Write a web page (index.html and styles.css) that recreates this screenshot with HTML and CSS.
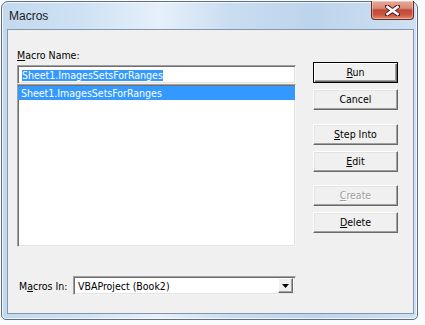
FILE: index.html
```html
<!DOCTYPE html>
<html lang="en">
<head>
	<meta charset="UTF-8">
	<title>Macros</title>
	<link rel="stylesheet" href="styles.css">
</head>
<body>
	<div class="window">
		<div class="titlebar">
			<span class="title">Macros</span>
			<span class="close">
				<svg width="15" height="11" viewBox="0 0 15 11">
					<path d="M2 1.5 L13 9.5 M13 1.5 L2 9.5" stroke="#5a2020" stroke-width="4.5" stroke-linecap="square"/>
					<path d="M2.5 2 L12.5 9 M12.5 2 L2.5 9" stroke="#fff" stroke-width="2.6" stroke-linecap="square"/>
				</svg>
			</span>
		</div>
		<div class="client">
			<div class="main">
				<div class="label"><u>M</u>acro Name:</div>
				<div class="field"><span class="sel">Sheet1.ImagesSetsForRanges</span></div>
				<div class="list">
					<div class="item on">Sheet1.ImagesSetsForRanges</div>
				</div>
				<div class="source">
					<div class="source-label">M<u>a</u>cros In:</div>
					<div class="combo">
						<span class="combo-text">VBAProject (Book2)</span>
						<span class="drop">
							<svg width="7" height="4" viewBox="0 0 7 4"><path d="M0 0 H7 L3.5 4 Z" fill="#000"/></svg>
						</span>
					</div>
				</div>
			</div>
			<div class="buttons">
				<div class="btn default"><u>R</u>un</div>
				<div class="btn">Cancel</div>
				<div class="btn group"><u>S</u>tep Into</div>
				<div class="btn"><u>E</u>dit</div>
				<div class="btn group second disabled"><u>C</u>reate</div>
				<div class="btn"><u>D</u>elete</div>
			</div>
		</div>
	</div>
</body>
</html>
```
FILE: styles.css
```css
*{
	margin: 0;
	padding: 0;
	box-sizing: border-box;
}
body{
	background: #fbfbfb;
	font-family: "DejaVu Sans Condensed", "Liberation Sans", Arial, sans-serif;
	font-size: 10.5px;
	color: #000;
	padding: 1px 0 0 1px;
}
.window{
	width: 417px;
	height: 319px;
	border: 1px solid #5f6e80;
	border-radius: 7px 7px 5px 5px;
	background: linear-gradient(90deg, #c3d9ef 0%, #cfe2f4 20%, #e6f0fa 38%, #c9ddf1 55%, #bcd4ec 75%, #cfe1f3 100%);
	box-shadow: inset 0 0 0 1px rgba(255,255,255,0.7);
	display: flex;
	flex-direction: column;
}
.titlebar{
	height: 27px;
	display: flex;
	align-items: flex-start;
}
.title{
	font-family: "Liberation Sans", Arial, sans-serif;
	font-size: 12px;
	line-height: 14px;
	padding: 7px 0 0 7px;
	color: #1a1a1a;
}
.close{
	margin: -1px 3px 0 auto;
	width: 43px;
	height: 19px;
	border: 1px solid #6b2a22;
	border-top: none;
	border-radius: 0 0 4px 4px;
	background: linear-gradient(#e9a897 0%, #d98a78 40%, #c2473a 50%, #c9553f 75%, #dd8c6e 100%);
	box-shadow: inset 0 0 0 1px rgba(255,255,255,0.35);
	display: flex;
	align-items: center;
	justify-content: center;
}
.client{
	flex: 1;
	margin: 0 3px 5px 5px;
	border: 1px solid #8297ae;
	background: #f0f0f0;
	display: flex;
	padding: 19px 0 0 9px;
}
.main{
	width: 279px;
	display: flex;
	flex-direction: column;
}
.label{
	line-height: 13px;
	margin-bottom: 3px;
}
.field, .list, .combo{
	background: #fff;
	border: 1px solid;
	border-color: #a0a0a0 #f4f4f4 #f4f4f4 #a0a0a0;
	box-shadow: inset 1px 1px #6f6f6f, inset -1px -1px #e3e3e3;
}
.field{
	height: 19px;
	padding: 3px 0 0 4px;
}
.sel{
	display: inline-block;
	line-height: 11px;
	height: 11px;
	background: #3399ff;
	color: #fff;
}
.list{
	height: 163px;
	padding: 1px 0;
}
.item{
	height: 14px;
	line-height: 14px;
	padding-left: 3px;
}
.item.on{
	background: #3399ff;
	color: #fff;
}
.source{
	margin-top: 29px;
	display: flex;
	align-items: center;
}
.source-label{
	width: 56px;
	padding-left: 2px;
}
.combo{
	width: 223px;
	height: 19px;
	display: flex;
	align-items: center;
	padding: 0 2px 0 4px;
}
.combo-text{
	flex: 1;
}
.drop{
	width: 15px;
	height: 15px;
	background: #f0f0f0;
	border: 1px solid;
	border-color: #fff #696969 #696969 #fff;
	box-shadow: inset -1px -1px #a0a0a0;
	display: flex;
	align-items: center;
	justify-content: center;
}
.buttons{
	margin: 13px 0 0 17px;
	display: flex;
	flex-direction: column;
}
.btn{
	width: 85px;
	height: 21px;
	margin-bottom: 6px;
	line-height: 19px;
	text-align: center;
	background: #f0f0f0;
	border: 1px solid;
	border-color: #fff #696969 #696969 #fff;
	box-shadow: inset -1px -1px #a0a0a0, inset 1px 1px #e3e3e3;
}
.btn.default{
	border-color: #000;
	box-shadow: inset 1px 1px #fff, inset -1px -1px #696969, inset -2px -2px #a0a0a0;
}
.btn.group{margin-top: 8px;}
.btn.group.second{margin-top: 7px;}
.btn.disabled{
	color: #a0a0a0;
	text-shadow: 1px 1px #fff;
}
```
